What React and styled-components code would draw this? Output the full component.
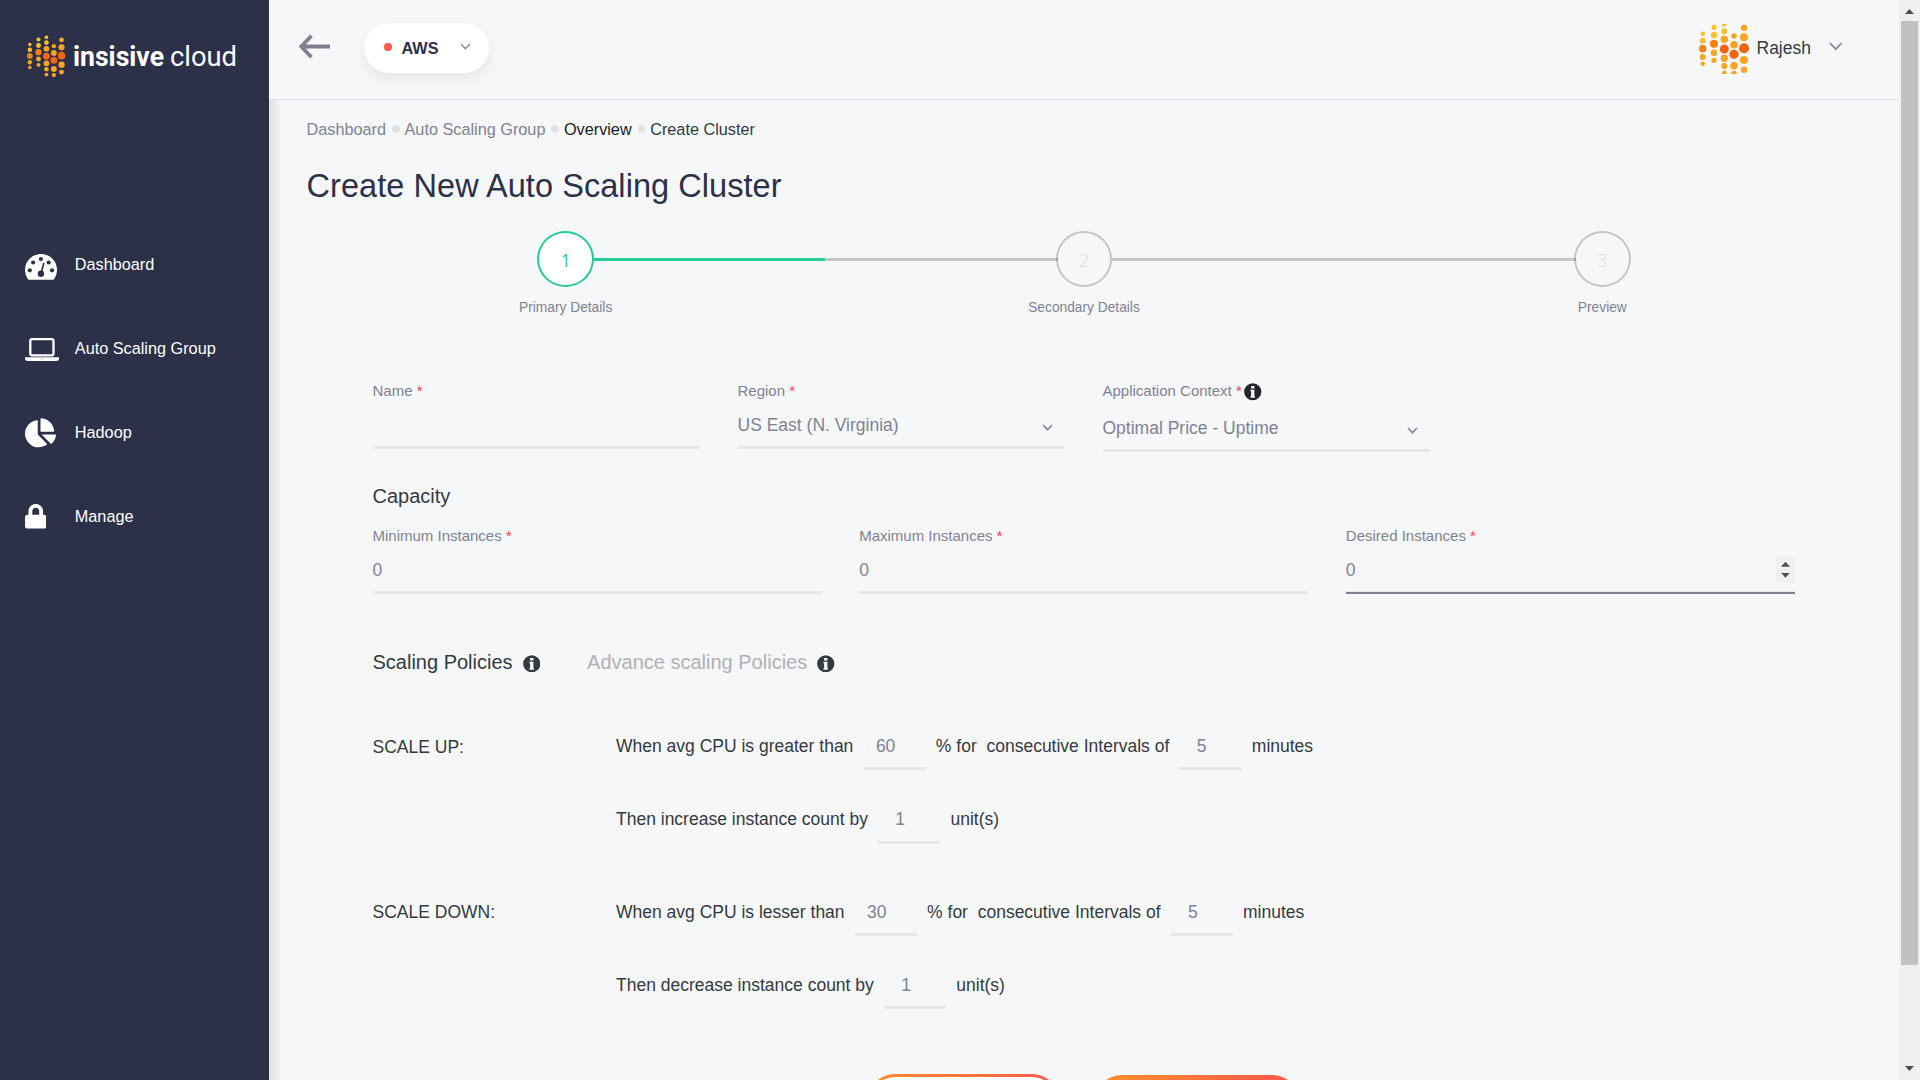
import React from "react";
import styled, { createGlobalStyle } from "styled-components";
import { FaChartPie, FaLock } from "react-icons/fa";

const GlobalStyle = createGlobalStyle`
  *, *::before, *::after { box-sizing: border-box; }
  body {
    margin: 0;
    background: #f5f7f9;
    font-family: "Liberation Sans", Arial, sans-serif;
    color: #343a40;
  }
  h1, h2, p { margin: 0; font-weight: 400; }
`;

const Shell = styled.div`
  display: flex;
  height: 100vh;
  overflow: hidden;
`;

/* ---------- Sidebar ---------- */

const Sidebar = styled.aside`
  flex: 0 0 269px;
  background: #2c3049;
`;

const Brand = styled.div`
  display: flex;
  align-items: flex-start;
  height: 222px;
  padding: 36.5px 0 0 27.2px;
`;

const Wordmark = styled.svg`
  display: block;
  margin: 0 0 0 7.4px;
  fill: #ffffff;
  font-family: Roboto, sans-serif;
  font-size: 26.8px;
`;

const NavItem = styled.a`
  display: flex;
  height: 84px;
  padding-left: 24.5px;
  color: #ffffff;
  font-size: 16.25px;
  line-height: 84px;
`;

const NavIcon = styled.span`
  flex: 0 0 50.3px;
  padding-top: ${(p) => p.$top}px;
  line-height: 0;
`;

/* ---------- Header ---------- */

const Main = styled.main`
  flex: 1;
  min-width: 0;
`;

const Header = styled.header`
  display: flex;
  justify-content: space-between;
  height: 100px;
  padding: 23px 57px 0 29px;
  border-bottom: 1px solid #dfe1e4;
`;

const HeaderGroup = styled.div`
  display: flex;
  align-items: flex-start;
`;

const BackArrow = styled.svg`
  display: block;
  margin: 10.5px 34px 0 0;
`;

const Provider = styled.div`
  display: flex;
  align-items: center;
  width: 125px;
  height: 50px;
  padding: 0 18px 0 20px;
  border-radius: 25px;
  background: #ffffff;
  box-shadow: 0 6px 14px rgba(0, 0, 0, 0.07);

  & > svg { margin-top: -3px; }
`;

const StatusDot = styled.span`
  width: 7.5px;
  height: 7.5px;
  margin-top: -2px;
  border-radius: 50%;
  background: #ff5b4a;
`;

const ProviderName = styled.span`
  flex: 1;
  padding-left: 10px;
  font-size: 16.25px;
  font-weight: 700;
  line-height: 50px;
  color: #2c3049;
`;

const UserName = styled.span`
  flex: none;
  width: 79.7px;
  height: 50px;
  padding-left: 7.7px;
  font-size: 17.5px;
  line-height: 48px;
`;

const User = styled(HeaderGroup)`
  align-items: center;
  height: 50px;
  margin-top: 0.5px;

  & > svg:last-child { margin-top: -4px; }
`;

const Glyph = styled.svg`
  display: block;
  flex: none;
`;

/* ---------- Content ---------- */

const Content = styled.section`
  height: calc(100vh - 100px);
  padding: 16.5px 37.5px 0;
  background: linear-gradient(to right, rgba(0, 0, 0, 0.09), rgba(0, 0, 0, 0) 14px);
  overflow: hidden;
`;

const Breadcrumb = styled.nav`
  display: flex;
  align-items: center;
  height: 24px;
  font-size: 16.25px;
  line-height: 24px;
`;

const Crumb = styled.span`
  display: flex;
  align-items: center;
  color: ${(p) => p.$color};

  &:not(:first-child)::before {
    content: "";
    width: 7.5px;
    height: 7.5px;
    margin: 1px 5px 0 6px;
    border-radius: 50%;
    background: #e3e3e4;
  }
`;

const Title = styled.h1`
  margin-top: 25px;
  font-size: 32.5px;
  letter-spacing: 0.06px;
  line-height: 40px;
  color: #2c3049;
`;

const Stepper = styled.div`
  display: flex;
  margin-top: 25.5px;
`;

const Step = styled.div`
  flex: 1;
  display: flex;
  flex-direction: column;
`;

const StepTrack = styled.div`
  display: flex;
  align-items: center;
  height: 56px;
`;

const Rail = styled.span`
  flex: 1;
  height: 3px;
  margin: ${(p) => (p.$side === "left" ? "0 -2px 0 0" : "0 0 0 -2px")};
  background: ${(p) => p.$color};
`;

const StepCircle = styled.span`
  flex: none;
  width: 56.5px;
  height: 56px;
  border: 2.5px solid ${(p) => (p.$active ? "#27cb96" : "rgba(0, 0, 0, 0.2)")};
  border-radius: 50%;
  background: ${(p) => (p.$active ? "#ffffff" : "transparent")};
  color: ${(p) => (p.$active ? "#27cb96" : "#dadbde")};
  font-family: "Open Sans", sans-serif;
  font-size: 17.5px;
  font-weight: ${(p) => (p.$active ? 400 : 300)};
  line-height: 55px;
  text-align: center;
`;

const StepLabel = styled.span`
  margin-top: 11px;
  font-size: 13.75px;
  line-height: 20px;
  text-align: center;
  color: #7f8292;
`;

const Form = styled.form`
  padding: 63.3px 66.5px 0 66px;
`;

const FieldRow = styled.div`
  display: grid;
  grid-template-columns: ${(p) => p.$columns};
  column-gap: 37.5px;
  align-items: start;
`;

const Field = styled.div`
  display: flex;
  flex-direction: column;
`;

const Label = styled.label`
  display: flex;
  height: ${(p) => (p.$tall ? 23 : 20)}px;
  font-size: 15px;
  line-height: 20px;
  white-space: pre;
  color: #7f8292;

  svg { margin: 2px 0 0 2.5px; color: #212529; }
`;

const Required = styled.span`
  color: #ff3d57;
`;

const Control = styled.div`
  display: flex;
  justify-content: space-between;
  align-items: center;
  height: 48px;
  padding-top: ${(p) => (p.$focused ? 2 : 3)}px;
  border-bottom: ${(p) => (p.$focused ? "2px solid #7f8192" : "3px solid #e6e7e8")};
  box-shadow: ${(p) => (p.$focused ? "inset 0 -1px 0 #e6e7e8" : "none")};
  font-size: 17.5px;
  line-height: 42px;
  color: #7f8292;

  ${Glyph} { margin: 4px 12.5px 0 0; }
`;

const Spinner = styled.span`
  display: flex;
  flex-direction: column;
  align-items: center;
  justify-content: space-between;
  width: 19px;
  height: 26px;
  margin-top: -1px;
  padding: 5px 0;
  background: #f0f0f0;
`;

const Triangle = styled.span`
  width: 9px;
  height: 5px;
  background: #505050;
  clip-path: ${(p) => (p.$up ? "polygon(50% 0, 100% 100%, 0 100%)" : "polygon(0 0, 100% 0, 50% 100%)")};
`;

const SectionTitle = styled.h2`
  margin: 30px 0 16px;
  font-size: 20px;
  line-height: 28px;
`;

const PolicyTabs = styled.div`
  display: flex;
  gap: 47px;
  margin-top: 54px;
`;

const PolicyTab = styled.span`
  display: flex;
  gap: 10px;
  font-size: 20px;
  line-height: 28px;
  color: ${(p) => (p.$active ? "#343a40" : "#afb1b5")};

  svg { margin-top: 6.3px; color: #343a40; }
`;

const Policy = styled.div`
  display: grid;
  grid-template-columns: 243.5px 1fr;
  margin-top: ${(p) => p.$top}px;
  font-size: 17.5px;
  line-height: 42px;
`;

const PolicyName = styled.span`
  padding-top: ${(p) => p.$offset}px;
`;

const Sentences = styled.div`
  display: grid;
  row-gap: 23.3px;
`;

const Sentence = styled.p`
  display: flex;
  gap: 10px;
  height: 50px;
  white-space: pre;

  & > span { padding-top: ${(p) => p.$offset}px; }
  & > b { padding-top: ${(p) => p.$offset}px; }
`;

const SmallInput = styled.b`
  width: 62.5px;
  height: 50px;
  padding-right: 18px;
  border-bottom: 3px solid #e6e7e8;
  font-weight: 400;
  text-align: center;
  color: #7f8292;
`;

const Actions = styled.div`
  display: flex;
  gap: 36px;
  margin: 65px 0 0 495.5px;
`;

const Button = styled.button`
  flex: none;
  width: ${(p) => (p.$outline ? 191 : 204)}px;
  height: 54px;
  margin-top: ${(p) => (p.$outline ? 0 : 1)}px;
  border: ${(p) => (p.$outline ? "3px solid transparent" : "0")};
  border-radius: 27px;
  background: ${(p) =>
    p.$outline
      ? "linear-gradient(#ffffff, #ffffff) padding-box, linear-gradient(to right, #ff8f2b, #ff5a4a) border-box"
      : "linear-gradient(to right, #ff8f2b 5%, #ff5a4a 90%)"};
`;

/* ---------- Scrollbar ---------- */

const Scrollbar = styled.div`
  flex: 0 0 21px;
  display: flex;
  flex-direction: column;
  align-items: center;
  background: #f0f0f0;
  padding: 9px 0;
`;

const Thumb = styled.span`
  width: 17px;
  height: 944px;
  margin: 7px 0 auto;
  background: #c1c1c1;
`;

/* Each dot: x, y, radius, tone */
const DOTS = [
  [3.7, 9.7, 2.3, 0], [3.7, 16.7, 2.9, 0], [3.7, 24.7, 3.7, 2], [3.7, 33, 2.9, 1], [3.7, 39.7, 2.3, 1],
  [15, 3.3, 2.6, 0], [15, 11, 3.2, 0], [15, 19.7, 4, 2], [15, 28.7, 3.2, 1], [15, 36.3, 2.6, 1],
  [25.3, 0.3, 2.4, 0], [25.3, 7.3, 3, 0], [25.3, 15.3, 3.7, 1], [25.3, 25, 4.5, 3], [25.3, 34.3, 3.7, 1], [25.3, 42, 3, 1], [25.3, 48.9, 2.4, 1],
  [35, 12, 2.8, 1], [35, 20.7, 3.8, 1], [35, 30.3, 4.6, 3], [35, 41.7, 3.8, 1], [35, 49.6, 2.8, 1],
  [45, 3.7, 3.2, 1], [45, 13.3, 4, 1], [45, 24.3, 5, 3], [45, 36, 4.1, 1], [45, 45.7, 3.2, 1],
];
const TONES = ["#fdbf2b", "#fba523", "#fd7f12", "#f0640c"];

function DotLogo({ size, clip }) {
  return (
    <Glyph width={size} height={size} viewBox="0 0 50 50" overflow={clip ? "hidden" : "visible"}>
      {DOTS.map(([x, y, r, tone], i) => (
        <circle key={i} cx={x} cy={y} r={r} fill={TONES[tone]} />
      ))}
    </Glyph>
  );
}

function Chevron({ width, height, stroke = 1.8 }) {
  return (
    <Glyph width={width} height={height} viewBox={`0 0 ${width} ${height}`}>
      <path
        d={`M1 1 L${width / 2} ${height - 1.3} L${width - 1} 1`}
        fill="none"
        stroke="#858a9b"
        strokeWidth={stroke}
      />
    </Glyph>
  );
}

function InfoIcon() {
  return (
    <Glyph width="17.5" height="17.5" viewBox="0 0 17.5 17.5">
      <circle cx="8.75" cy="8.75" r="8.6" fill="currentColor" />
      <path
        d="M7.1 2.9 H10.4 V5.6 H7.1 Z M6.4 6.7 H10.4 V13.2 H11 V14.8 H6.4 V13.2 H7.1 V8.2 H6.4 Z"
        fill="#f5f7f9"
      />
    </Glyph>
  );
}

function GaugeIcon() {
  return (
    <svg width="32" height="26" viewBox="0 0 32 26">
      <path d="M4 25.8 Q3.2 25.8 2.8 25 A16 16 0 1 1 29.2 25 Q28.8 25.8 28 25.8 Z" fill="#fff" />
      <g fill="#2c3049">
        <circle cx="15.9" cy="5" r="2.1" />
        <circle cx="8.1" cy="8.5" r="2.1" />
        <circle cx="23.7" cy="8.5" r="2.1" />
        <circle cx="4.8" cy="16.3" r="2.1" />
        <circle cx="27" cy="16.3" r="2.1" />
        <circle cx="15.9" cy="19.7" r="3.2" />
      </g>
      <path d="M16.2 19 L18.7 9.6" stroke="#2c3049" strokeWidth="1.7" strokeLinecap="round" />
    </svg>
  );
}

function LaptopIcon() {
  return (
    <svg width="34" height="23" viewBox="0 0 34 23">
      <rect x="5.3" y="1.2" width="23.2" height="16.2" rx="1.8" fill="none" stroke="#fff" strokeWidth="2.3" />
      <path d="M0 19.3 H34 V20.8 Q34 23 31 23 H3 Q0 23 0 20.8 Z" fill="#fff" />
      <path d="M15.3 20.9 H18.7" stroke="#b9bbc6" strokeWidth="0.8" />
    </svg>
  );
}

const NAV = [
  { label: "Dashboard", icon: <GaugeIcon />, top: 32 },
  { label: "Auto Scaling Group", icon: <LaptopIcon />, top: 32 },
  { label: "Hadoop", icon: <FaChartPie style={{ width: 31, height: 29.5 }} />, top: 28 },
  { label: "Manage", icon: <FaLock style={{ width: 21.5, height: 24.6 }} />, top: 30 },
];

const CRUMBS = [
  ["Dashboard", "#7f8292"],
  ["Auto Scaling Group", "#7f8292"],
  ["Overview", "#1d2025"],
  ["Create Cluster", "#343a40"],
];

const GREEN = "#27cb96";
const GREY = "#c5c6c8";
const STEPS = [
  { label: "Primary Details", left: "transparent", right: GREEN },
  { label: "Secondary Details", left: GREY, right: GREY },
  { label: "Preview", left: GREY, right: "transparent" },
];

function FormField({ label, value, select, spinner, info }) {
  return (
    <Field>
      <Label $tall={info}>
        {label} <Required>*</Required>
        {info && <InfoIcon />}
      </Label>
      <Control $focused={spinner}>
        <span>{value}</span>
        {select && <Chevron width={11} height={7} stroke={1.7} />}
        {spinner && (
          <Spinner>
            <Triangle $up />
            <Triangle />
          </Spinner>
        )}
      </Control>
    </Field>
  );
}

function ScalePolicy({ name, compare, action, percent, minutes, units, top, offset, secondOffset }) {
  return (
    <Policy $top={top}>
      <PolicyName $offset={offset}>{name}</PolicyName>
      <Sentences>
        <Sentence $offset={5}>
          <span>When avg CPU is {compare} than</span>
          <SmallInput>{percent}</SmallInput>
          <span>{"% for  consecutive Intervals of"}</span>
          <SmallInput>{minutes}</SmallInput>
          <span>minutes</span>
        </Sentence>
        <Sentence $offset={secondOffset}>
          <span>Then {action} instance count by</span>
          <SmallInput>{units}</SmallInput>
          <span>unit(s)</span>
        </Sentence>
      </Sentences>
    </Policy>
  );
}

export default function App() {
  return (
    <>
      <GlobalStyle />
      <Shell>
        <Sidebar>
          <Brand>
            <DotLogo size={38.4} />
            <Wordmark width="170" height="40">
              <text x="0" y="29.2" fontWeight="700" textLength="91" lengthAdjust="spacingAndGlyphs">insisive</text>
              <text x="97" y="29.2" fontWeight="400" textLength="67" lengthAdjust="spacingAndGlyphs">cloud</text>
            </Wordmark>
          </Brand>
          {NAV.map((item) => (
            <NavItem key={item.label}>
              <NavIcon $top={item.top}>{item.icon}</NavIcon>
              {item.label}
            </NavItem>
          ))}
        </Sidebar>

        <Main>
          <Header>
            <HeaderGroup>
              <BackArrow width="32" height="25" viewBox="0 0 32 25">
                <path d="M13.5 1.8 L3.3 12.5 L13.5 23.2 M3.3 12.5 H32" fill="none" stroke="#7f8192" strokeWidth="3.8" />
              </BackArrow>
              <Provider>
                <StatusDot />
                <ProviderName>AWS</ProviderName>
                <Chevron width={11} height={7} stroke={1.4} />
              </Provider>
            </HeaderGroup>
            <User>
              <DotLogo size={50} clip />
              <UserName>Rajesh</UserName>
              <Chevron width={13.5} height={8.5} stroke={1.8} />
            </User>
          </Header>

          <Content>
            <Breadcrumb>
              {CRUMBS.map(([text, color]) => (
                <Crumb key={text} $color={color}>{text}</Crumb>
              ))}
            </Breadcrumb>
            <Title>Create New Auto Scaling Cluster</Title>

            <Stepper>
              {STEPS.map((step, i) => (
                <Step key={step.label}>
                  <StepTrack>
                    <Rail $side="left" $color={step.left} />
                    <StepCircle $active={i === 0}>{i + 1}</StepCircle>
                    <Rail $side="right" $color={step.right} />
                  </StepTrack>
                  <StepLabel>{step.label}</StepLabel>
                </Step>
              ))}
            </Stepper>

            <Form>
              <FieldRow $columns="327.5px 327.5px 327.5px">
                <FormField label="Name" value="" />
                <FormField label="Region" value="US East (N. Virginia)" select />
                <FormField label="Application Context" value="Optimal Price - Uptime" select info />
              </FieldRow>

              <SectionTitle>Capacity</SectionTitle>
              <FieldRow $columns="1fr 1fr 1fr">
                <FormField label="Minimum Instances" value="0" />
                <FormField label="Maximum Instances" value="0" />
                <FormField label="Desired Instances" value="0" spinner />
              </FieldRow>

              <PolicyTabs>
                <PolicyTab $active>
                  Scaling Policies <InfoIcon />
                </PolicyTab>
                <PolicyTab>
                  Advance scaling Policies <InfoIcon />
                </PolicyTab>
              </PolicyTabs>

              <ScalePolicy
                name="SCALE UP:" compare="greater" action="increase"
                percent="60" minutes="5" units="1" top={44} offset={6} secondOffset={4}
              />
              <ScalePolicy
                name="SCALE DOWN:" compare="lesser" action="decrease"
                percent="30" minutes="5" units="1" top={42.5} offset={5} secondOffset={5}
              />

              <Actions>
                <Button type="button" $outline />
                <Button type="button" />
              </Actions>
            </Form>
          </Content>
        </Main>

        <Scrollbar>
          <Triangle $up />
          <Thumb />
          <Triangle />
        </Scrollbar>
      </Shell>
    </>
  );
}
